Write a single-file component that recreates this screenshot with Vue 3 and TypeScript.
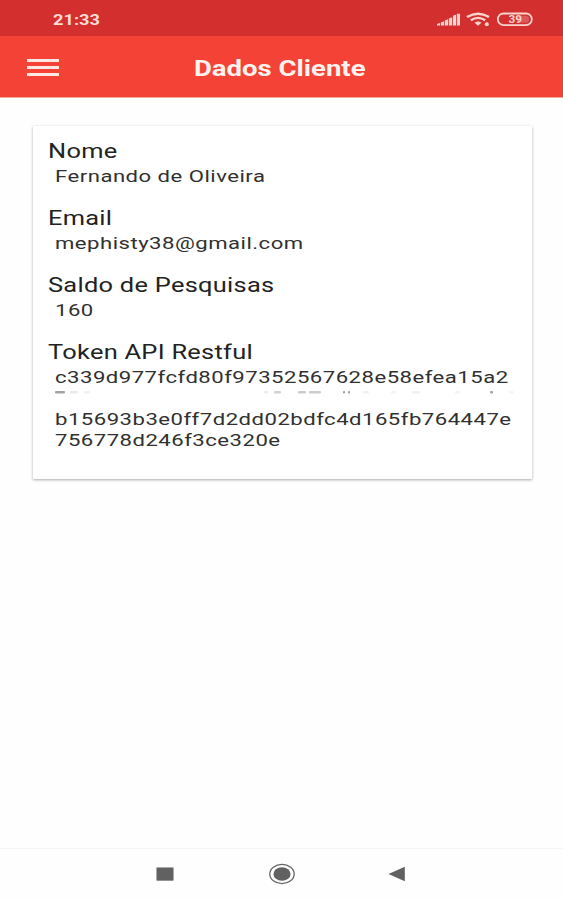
<script setup lang="ts">
interface Field {
  label: string
  lines: string[]
}

const fields: Field[] = [
  { label: 'Nome', lines: ['Fernando de Oliveira'] },
  { label: 'Email', lines: ['mephisty38@gmail.com'] },
  { label: 'Saldo de Pesquisas', lines: ['160'] },
  {
    label: 'Token API Restful',
    lines: [
      'c339d977fcfd80f97352567628e58efea15a2',
      '',
      'b15693b3e0ff7d2dd02bdfc4d165fb764447e',
      '756778d246f3ce320e',
    ],
  },
]

/* Remains of the covered token line: x, width, opacity */
const remains: number[][] = [
  [0, 10, 0.36], [15, 8, 0.08], [29, 6, 0.06],
  [209, 4, 0.08], [219, 7, 0.18], [243, 8, 0.2], [254, 12, 0.2],
  [288, 2, 0.4], [293, 2, 0.4], [308, 6, 0.06], [336, 5, 0.05],
  [357, 8, 0.06], [400, 5, 0.05], [435, 3, 0.36], [454, 5, 0.04],
]
</script>

<template>
  <div class="screen">
    <div class="status">
      <span class="clock">21:33</span>
      <svg class="signals" width="98" height="18" viewBox="0 0 98 18">
        <g fill="#fcd3cd">
          <path d="M0 15.500V14l3.200-1v2.500zM4 12.300l3.200-1v4.200H4zM8 10.300l3.200-1v6.200H8zM12 8.300l3.200-1v8.200H12zM16 5.800l3-1v10.700h-3zM19.800 3.700h3.200v11.800h-3.200z" />
          <circle cx="49.800" cy="14.200" r="2" />
          <path d="M37.600 12.800Q41 10.200 44.400 12.800L41 15.800z" />
        </g>
        <g fill="none" stroke="#fcd3cd">
          <path d="M30 7Q41 .400 52 7" stroke-width="2.600" />
          <path d="M33.800 10.300Q41 5.600 48.200 10.300" stroke-width="2.300" />
          <rect x="60.800" y="3.500" width="34" height="11.600" rx="5.800" stroke-width="1.800" />
        </g>
        <rect x="80" y="5.800" width="12" height="7" rx="3" fill="#fcd3cd" opacity=".25" />
        <text x="71.500" y="13" class="charge" textLength="13.500" lengthAdjust="spacingAndGlyphs">39</text>
      </svg>
    </div>
    <header class="bar">
      <div class="menu"><i /><i /><i /></div>
      <h1 class="title">Dados Cliente</h1>
    </header>
    <main class="content">
      <section class="card">
        <div v-for="field in fields" :key="field.label" class="field">
          <div class="label">{{ field.label }}</div>
          <template v-for="(line, i) in field.lines" :key="i">
            <div v-if="line" class="value">{{ line }}</div>
            <svg v-else class="covered" width="462" height="21" viewBox="0 0 462 21">
              <rect v-for="(r, n) in remains" :key="n" :x="r[0]" y="3" :width="r[1]" height="2.500" rx="1" :opacity="r[2]" />
            </svg>
          </template>
        </div>
      </section>
    </main>
    <nav class="nav">
      <svg width="18" height="14" viewBox="0 0 18 14"><rect x=".800" y=".800" width="16.400" height="12.600" fill="#616161" stroke="#777" stroke-width=".600" /></svg>
      <svg width="28" height="22" viewBox="0 0 28 22">
        <ellipse cx="14" cy="11" rx="12.200" ry="9.600" fill="none" stroke="#666" stroke-width="1.300" />
        <ellipse cx="14" cy="11" rx="8.600" ry="6.800" fill="#616161" />
      </svg>
      <svg width="18" height="16" viewBox="0 0 18 16"><path d="M.500 8L16.800 .800v14.400z" fill="#616161" /></svg>
    </nav>
  </div>
</template>

<style>
body {
  background: #fefefe;
}
</style>

<style scoped>
.screen {
  height: 900px;
  display: flex;
  flex-direction: column;
  background: #fefefe;
  color: #222;
  font-family: Roboto, "Liberation Sans", sans-serif;
}
.status {
  height: 36px;
  box-sizing: border-box;
  flex: none;
  display: flex;
  align-items: center;
  justify-content: space-between;
  padding: 3px 28px 0 53px;
  background: #d32f2f;
}
.signals {
  margin-top: -1px;
}
.clock {
  color: #fcdcd7;
  font-size: 14px;
  font-weight: 700;
  transform: scaleX(1.3);
  transform-origin: left;
}
.charge {
  font-size: 10px;
  font-weight: 700;
  fill: #fcd3cd;
}
.bar {
  height: 62px;
  box-sizing: border-box;
  flex: none;
  display: flex;
  align-items: center;
  padding-top: 2px;
  background: #f44336;
  border-bottom: 1px solid #f0a49b;
}
.menu {
  width: 32px;
  margin-left: 27px;
  display: flex;
  flex-direction: column;
  gap: 4px;
}
.menu i {
  height: 3px;
  background: #fde8e4;
}
.title {
  margin: 2px 0 0 135px;
  color: #fff2ef;
  font-size: 22px;
  font-weight: 700;
  line-height: 26px;
  white-space: nowrap;
  transform: scaleX(1.25);
  transform-origin: left;
}
.content {
  flex: 1;
  padding: 28px 31px 0 33px;
}
.card {
  height: 353px;
  box-sizing: border-box;
  padding: 13px 14.5px;
  background: #fff;
  border-radius: 1px;
  box-shadow: 0 1px 3px rgba(0, 0, 0, 0.34);
}
.field {
  margin-bottom: 19px;
}
.label,
.value {
  width: max-content;
  white-space: nowrap;
  transform-origin: left;
}
.label {
  margin-bottom: 2px;
  font-size: 20px;
  line-height: 25px;
  letter-spacing: 0.22px;
  transform: scaleX(1.27);
}
.value {
  margin-left: 7px;
  color: #303030;
  font-size: 17px;
  line-height: 21px;
  letter-spacing: 0.38px;
  transform: scaleX(1.3);
}
.covered {
  display: block;
  margin-left: 7px;
}
.nav {
  height: 52px;
  box-sizing: border-box;
  flex: none;
  display: flex;
  align-items: center;
  gap: 94px;
  padding: 0 0 1px 156px;
  border-top: 1px solid #f4f4f4;
}
.nav svg:last-child {
  margin-left: -2px;
}
</style>
